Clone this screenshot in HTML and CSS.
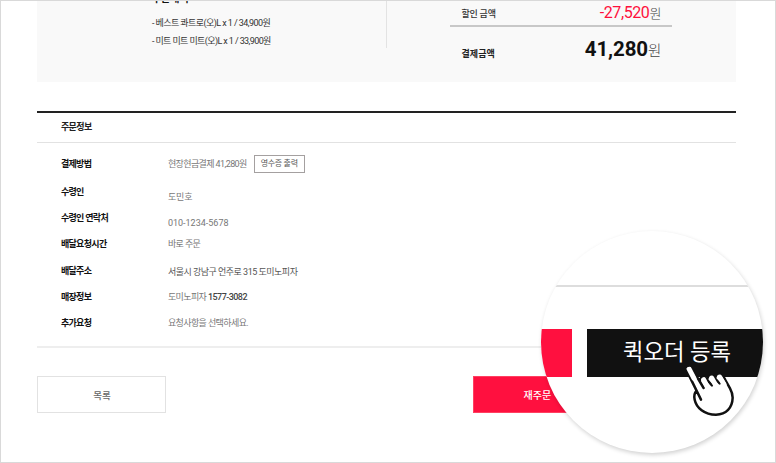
FILE: index.html
```html
<!DOCTYPE html>
<html lang="ko">
<head>
<meta charset="utf-8">
<title>주문정보</title>
<link rel="stylesheet" href="styles.css">
</head>
<body>
<div class="frame">
  <main class="page">
    <section class="summary">
      <div class="items">
        <h2 class="items-title">주문내역</h2>
        <p class="item">- 베스트 콰트로(오)L x 1 / 34,900원</p>
        <p class="item item-long">- 미트 미트 미트(오)L x 1 / 33,900원</p>
      </div>
      <div class="amounts">
        <div class="amount discount"><span class="name">할인 금액</span><span class="sum"><span class="num">-27,520</span><span class="won">원</span></span></div>
        <div class="amount total"><span class="name">결제금액</span><span class="sum"><span class="num">41,280</span><span class="won">원</span></span></div>
      </div>
    </section>
    <section class="order">
      <h2 class="order-title">주문정보</h2>
      <dl class="info">
        <dt>결제방법</dt><dd><span class="pay">현장현금결제 41,280원</span><button class="receipt"><span>영수증 출력</span></button></dd>
        <dt>수령인</dt><dd class="low name-value"><span>도민호</span></dd>
        <dt>수령인 연락처</dt><dd class="low phone"><span>010-1234-5678</span></dd>
        <dt>배달요청시간</dt><dd><span>바로 주문</span></dd>
        <dt>배달주소</dt><dd class="address"><span>서울시 강남구 언주로 315 도미노피자</span></dd>
        <dt>매장정보</dt><dd class="store"><span>도미노피자 <b>1577-3082</b></span></dd>
        <dt>추가요청</dt><dd><span>요청사항을 선택하세요.</span></dd>
      </dl>
    </section>
    <div class="actions">
      <button class="list">목록</button>
      <button class="reorder">재주문</button>
    </div>
  </main>
  <div class="lens">
    <div class="lens-line"></div>
    <div class="lens-bar">
      <span class="lens-red"></span>
      <span class="lens-black"><span>퀵오더 등록</span></span>
    </div>
  </div>
  <svg class="hand" viewBox="0 0 240 210" width="80" height="70">
    <path class="skin" d="M50 47C46 37 60 31 66 41L90 84C89 70 96 64 106 70L113 82C111 65 122 60 131 68L138 80C136 60 148 52 157 63L181 104C197 140 178 176 138 179C95 180 70 150 72 124C72 116 76 111 82 107Z"/>
    <path class="outline" d="M50 47L93 134M66 41L101 99M90 78C88 70 96 63 105 68L126 91M112 76C110 66 119 58 130 66L149 85M136 72C134 60 144 52 155 59C160 63 162 68 166 75L180 100C186 111 188 119 188 128C187 158 169 178 138 179C103 179 79 158 74 134C71 121 74 113 80 107"/>
    <path class="tips" d="M101 74L113 97M125 69L138 92M149 66L162 88M58 43L72 70"/>
  </svg>
</div>
</body>
</html>
```
FILE: styles.css
```css
* { box-sizing: border-box; margin: 0; padding: 0; }
body { background: #fff; font-family: Roboto, "Noto Sans CJK KR", sans-serif; }
button { font: inherit; background: #fff; }
.frame { position: relative; width: 776px; height: 463px; border: 1px solid #d9d9d9; overflow: hidden; }
.page { width: 699px; margin-left: 36.4px; }
.summary { height: 81px; background: #f9f9f9; display: flex; overflow: hidden; }
.items { width: 350px; height: 47px; padding-left: 114.5px; border-right: 1px solid #e3e3e3; color: #333; }
.items-title { font-size: 10px; line-height: 14px; height: 12px; margin-top: -9px; color: #111; font-weight: 700; }
.item { font-size: 9px; line-height: 18px; letter-spacing: -.56px; white-space: nowrap; }
.item-long { letter-spacing: -.6px; }
.items-title + .item { margin-top: 10px; }
.amounts { width: 222px; margin-left: 63px; }
.amount { display: flex; justify-content: space-between; align-items: center; padding: 0 11px; }
.discount { height: 26px; border-bottom: 2px solid #c8c8c8; }
.total { height: 47px; }
.name { font-size: 9px; color: #333; font-weight: 500; letter-spacing: -.2px; }
.total .name { font-weight: 700; color: #222; padding-top: 5px; letter-spacing: 0.1px; }
.sum { display: flex; align-items: baseline; line-height: 24px; }
.num { font-size: 16px; color: #ff103c; letter-spacing: -.4px; }
.won { font-size: 13px; color: #444; font-weight: 300; }
.total .num { font-size: 20.5px; font-weight: 700; color: #111; letter-spacing: -.1px; }
.total .won { font-size: 14.5px; }
.order { margin-top: 29px; border-top: 2px solid #222; border-bottom: 2px solid #eee; height: 237px; }
.order-title { height: 30px; padding-left: 23.5px; border-bottom: 1px solid #e2e2e2; font-size: 9px; line-height: 29px; letter-spacing: -.6px; color: #222; }
.info { display: grid; grid-template-columns: 107px 1fr; grid-template-rows: 29px repeat(6, 26.3px); margin: 6px 0 0 23.5px; font-size: 9px; letter-spacing: -.6px; color: #777; }
.info dt { color: #111; font-weight: 700; display: flex; align-items: center; letter-spacing: -.68px; }
.info dd { display: flex; align-items: center; }
.info .low { padding-top: 11px; }
.info .name-value { letter-spacing: -.1px; }
.info .phone { letter-spacing: 0; }
.info .address { letter-spacing: -.5px; padding-top: 2px; color: #555; }
.store b { font-weight: 500; color: #444; letter-spacing: -.55px; }
.receipt { width: 51px; height: 18px; border: 1px solid #a4a0a0; margin-left: 7px; font-size: 8px; line-height: 14px; letter-spacing: -.3px; color: #555; }
.actions { display: flex; justify-content: space-between; margin-top: 28px; width: 564px; }
.list { width: 129px; height: 37px; border: 1px solid #e2e2e2; font-size: 9.5px; color: #666; font-weight: 500; }
.reorder { width: 128px; height: 37px; border: 1px solid #ff4061; background: #ff103f; color: #fff; font-size: 10px; font-weight: 500; }
.lens { position: absolute; left: 540px; top: 230px; width: 221.5px; height: 221.5px; border-radius: 50%; background: #fff; overflow: hidden; box-shadow: 1px 2px 4px rgba(0,0,0,.18); }
.lens-line { height: 2px; margin: 54px 15px 0 14px; background: #ddd; }
.lens-bar { display: flex; gap: 15px; height: 48px; margin-top: 42px; }
.lens-red { width: 31px; background: #ff103f; }
.lens-black { flex: 1; background: #111; color: #fff; font-size: 22.3px; line-height: 46px; padding-left: 36px; white-space: nowrap; }
.hand { position: absolute; left: 669px; top: 354px; }
.skin { fill: #fff; }
.outline { fill: none; stroke: #111; stroke-width: 7.5; stroke-linecap: round; stroke-linejoin: round; }
.tips { fill: none; stroke: #fff; stroke-width: 15; stroke-linecap: round; }
```
